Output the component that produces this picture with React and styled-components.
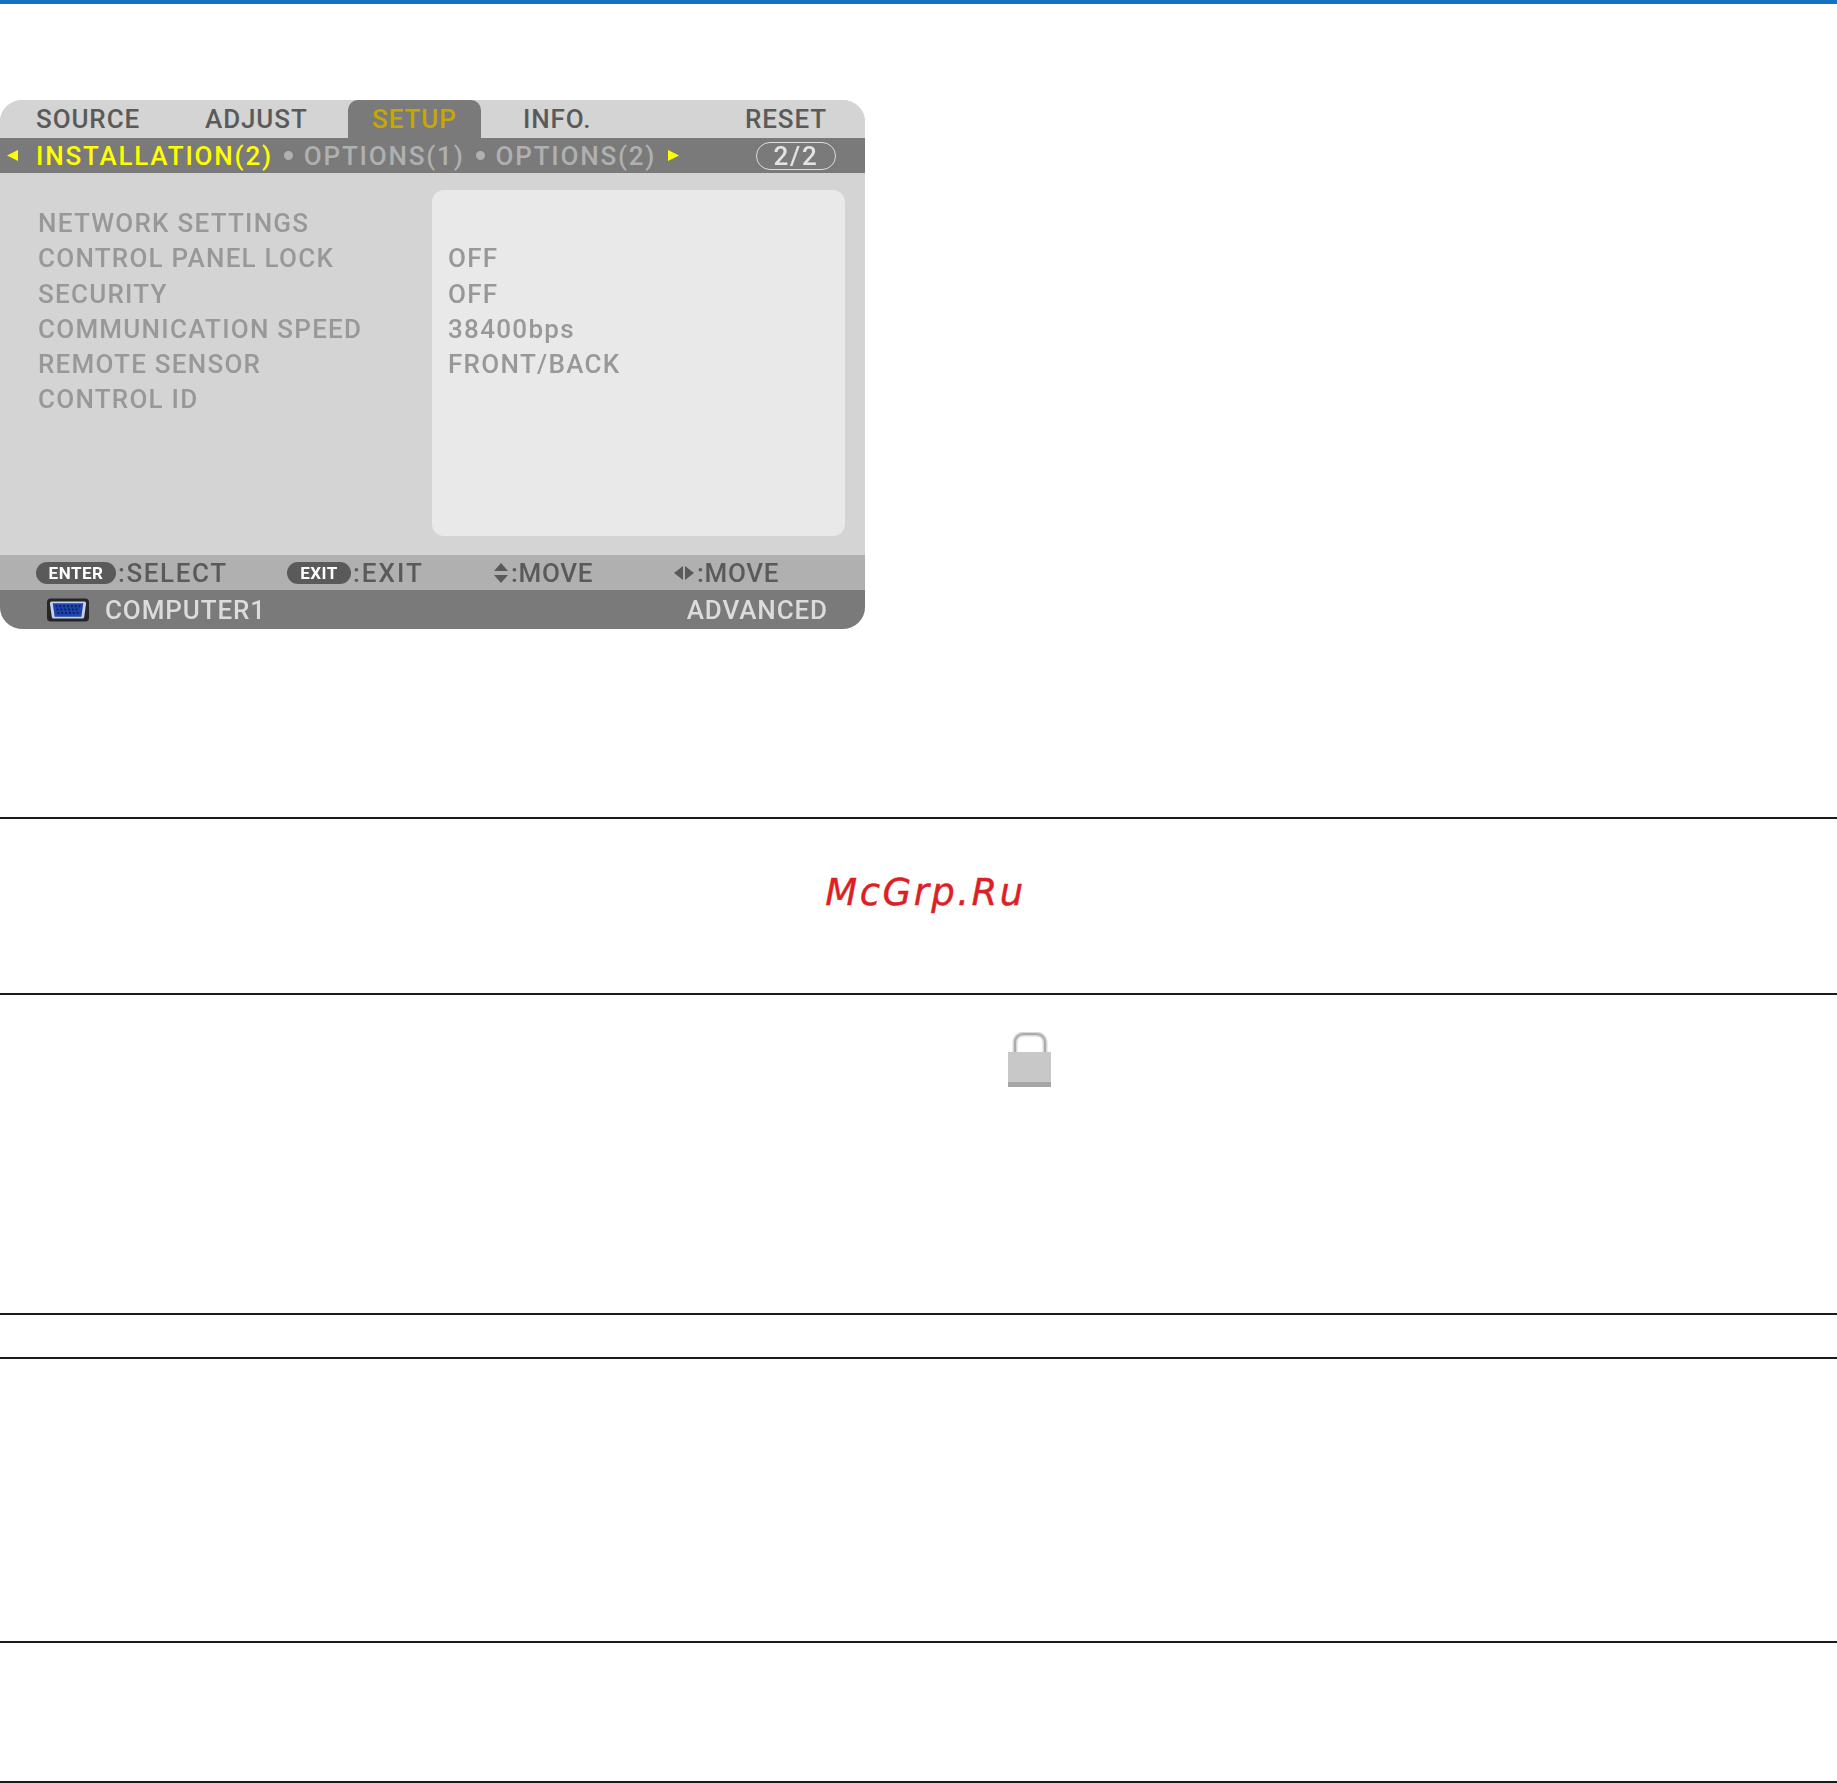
import React from "react";
import styled, { createGlobalStyle } from "styled-components";

const Global = createGlobalStyle`
  html, body { margin: 0; padding: 0; background: #fff; }
  body { font-family: Roboto, "Liberation Sans", Arial, sans-serif; }
`;
const Page = styled.div`
  width: 1837px;
  height: 1783px;
  overflow: hidden;
  display: flex;
  flex-direction: column;
`;
const TopBar = styled.div`
  height: 4px;
  background: #1470c0;
`;
const MenuSlot = styled.div`
  height: 813px;
  padding-top: 96px;
  box-sizing: border-box;
`;
const Menu = styled.div`
  width: 865px;
  height: 529px;
  border-radius: 22px;
  overflow: hidden;
  background: #d4d4d4;
  display: flex;
  flex-direction: column;
  font-size: 26px;
  font-weight: 500;
  letter-spacing: 0.9px;
  filter: blur(0.55px);
`;
const Tabs = styled.div`
  height: 38px;
  display: grid;
  grid-template-columns: 205px 143px 133px 264px 120px;
  background: #d4d4d4;
`;
const Tab = styled.div`
  display: flex;
  align-items: center;
  padding-left: ${(p) => p.$pad || 0}px;
  color: ${(p) => (p.$active ? "#c6a800" : "#5a5a5a")};
  background: ${(p) => (p.$active ? "#7a7a7a" : "transparent")};
  border-radius: ${(p) => (p.$active ? "10px 10px 0 0" : "0")};
`;
const SubBar = styled.div`
  height: 35px;
  background: #7a7a7a;
  display: flex;
  align-items: center;
  color: #b0b0b0;
  letter-spacing: 1.8px;
`;
const Arrow = styled.svg`
  display: block;
  flex: none;
  width: 11px;
  height: 11px;
  margin-left: ${(p) => p.$left || 0}px;
`;
const SubActive = styled.span`
  color: #ffff00;
  margin: 0 11px 0 ${(p) => p.$gap}px;
`;
const SubItem = styled.span`
  margin-right: ${(p) => p.$gap}px;
`;
const Dot = styled.span`
  width: 9px;
  height: 9px;
  border-radius: 50%;
  background: #b0b0b0;
  margin-right: 11px;
`;
const Pager = styled.span`
  margin-left: auto;
  margin-right: 29px;
  width: 80px;
  height: 28px;
  box-sizing: border-box;
  border: 1.5px solid #dcdcdc;
  border-radius: 14px;
  color: #e4e4e4;
  display: flex;
  align-items: center;
  justify-content: center;
`;
const Body = styled.div`
  flex: 1;
  display: flex;
  padding: 17px 20px 19px 38px;
`;
const Labels = styled.div`
  width: 394px;
  padding-top: 16px;
  color: #989898;
  letter-spacing: 1.25px;
`;
const Row = styled.div`
  height: 35.3px;
  line-height: 35.3px;
  white-space: nowrap;
`;
const Values = styled.div`
  flex: 1;
  background: #e9e9e9;
  border-radius: 12px;
  padding: 16px 0 0 16px;
  color: #989898;
  letter-spacing: 1.3px;
`;
const Hints = styled.div`
  height: 35px;
  background: #b0b0b0;
  display: grid;
  grid-template-columns: 251px 206px 180px 1fr;
  align-items: center;
  padding-left: 36px;
  color: #5a5a5a;
`;
const Hint = styled.div`
  display: flex;
  align-items: center;
  white-space: nowrap;
  letter-spacing: ${(p) => p.$spacing || 0.7}px;
`;
const Key = styled.span`
  background: #5a5a5a;
  color: #fff;
  font-weight: 700;
  font-size: 17px;
  letter-spacing: 0.5px;
  width: ${(p) => p.$w}px;
  height: 22px;
  border-radius: 11px;
  margin-right: 2px;
  display: flex;
  align-items: center;
  justify-content: center;
`;
const Glyph = styled.svg`
  display: block;
  flex: none;
  margin-right: 2px;
`;
const Status = styled.div`
  height: 39px;
  background: #7a7a7a;
  color: #dcdcdc;
  display: flex;
  align-items: center;
  padding: 0 37px 0 47px;
`;
const Source = styled.span`
  margin-left: 16px;
  flex: 1;
`;
const Sections = styled.div`
  flex: 1;
  display: flex;
  flex-direction: column;
`;
const Section = styled.div`
  height: ${(p) => p.$h}px;
  flex: none;
  box-sizing: border-box;
  border-top: 2px solid #1a1a1a;
`;
const Brand = styled.div`
  font-family: "DejaVu Sans", sans-serif;
  font-style: oblique;
  font-size: 37px;
  letter-spacing: 2.5px;
  color: #dc2024;
  -webkit-text-stroke: 0.4px #dc2024;
  text-align: center;
  padding: 52px 0 0 14px;
  line-height: 44px;
`;
const LockWrap = styled.div`
  padding: 37px 0 0 1008px;
`;
const VgaSvg = styled.svg`
  display: block;
  flex: none;
`;
const LockSvg = styled.svg`
  display: block;
`;

const VgaIcon = () => (
  <VgaSvg width="42" height="24" viewBox="0 0 44 24">
    <rect x="0" y="0" width="44" height="24" rx="4" fill="#262626" />
    <path d="M5 3h34a2 2 0 0 1 2 2l-2 14a2 2 0 0 1-2 2H7a2 2 0 0 1-2-2L3 5a2 2 0 0 1 2-2z" fill="#c8cfe8" />
    <path d="M6 5h32l-2 14H8z" fill="#1d45b0" />
    <g fill="#0c1e5c">
      {[10, 14, 18, 22, 26, 30, 34].map((x) => <rect key={x} x={x - 1} y="7" width="2" height="2" />)}
      {[11, 15, 19, 23, 27, 31].map((x) => <rect key={x} x={x - 1} y="10.5" width="2" height="2" />)}
      {[12, 16, 20, 24, 28, 32].map((x) => <rect key={x} x={x - 1} y="14" width="2" height="2" />)}
    </g>
  </VgaSvg>
);

const Lock = () => (
  <LockSvg width="44" height="56" viewBox="0 0 44 56">
    <path d="M7 21V11C7 5 11 2 16 2h12c5 0 9 3 9 9v10" fill="none" stroke="#d8d8d8" strokeWidth="5" />
    <path d="M7 21V11C7 5 11 2 16 2h12c5 0 9 3 9 9v10" fill="none" stroke="#ababab" strokeWidth="2" />
    <rect x="0" y="20" width="43" height="35" fill="#c8c8c8" />
    <rect x="0" y="50" width="43" height="5" fill="#a6a6a6" />
  </LockSvg>
);

export default function App() {
  return (
    <Page>
      <Global />
      <TopBar />
      <MenuSlot>
        <Menu>
          <Tabs>
            <Tab $pad={36}>SOURCE</Tab>
            <Tab>ADJUST</Tab>
            <Tab $active $pad={24}>SETUP</Tab>
            <Tab $pad={42}>INFO.</Tab>
            <Tab>RESET</Tab>
          </Tabs>
          <SubBar>
            <Arrow viewBox="0 0 11 11" $left={7}><path d="M11 0v11L0 5.5z" fill="#ffff00" /></Arrow>
            <SubActive $gap={18}>INSTALLATION(2)</SubActive>
            <Dot />
            <SubItem $gap={11}>OPTIONS(1)</SubItem>
            <Dot />
            <SubItem $gap={12}>OPTIONS(2)</SubItem>
            <Arrow viewBox="0 0 11 11"><path d="M0 0v11l11-5.5z" fill="#ffff00" /></Arrow>
            <Pager>2/2</Pager>
          </SubBar>
          <Body>
            <Labels>
              <Row>NETWORK SETTINGS</Row>
              <Row>CONTROL PANEL LOCK</Row>
              <Row>SECURITY</Row>
              <Row>COMMUNICATION SPEED</Row>
              <Row>REMOTE SENSOR</Row>
              <Row>CONTROL ID</Row>
            </Labels>
            <Values>
              <Row />
              <Row>OFF</Row>
              <Row>OFF</Row>
              <Row>38400bps</Row>
              <Row>FRONT/BACK</Row>
            </Values>
          </Body>
          <Hints>
            <Hint $spacing={1.6}><Key $w={80}>ENTER</Key>:SELECT</Hint>
            <Hint $spacing={2}><Key $w={64}>EXIT</Key>:EXIT</Hint>
            <Hint>
              <Glyph width="16" height="22" viewBox="0 0 16 22"><path d="M8 1l7 8H1zM1 13h14l-7 8z" fill="#5a5a5a" /></Glyph>:MOVE
            </Hint>
            <Hint>
              <Glyph width="22" height="16" viewBox="0 0 22 16"><path d="M10 1v14L1 8zM12 1l9 7-9 7z" fill="#5a5a5a" /></Glyph>:MOVE
            </Hint>
          </Hints>
          <Status>
            <VgaIcon />
            <Source>COMPUTER1</Source>
            <span>ADVANCED</span>
          </Status>
        </Menu>
      </MenuSlot>
      <Sections>
        <Section $h={176}><Brand>McGrp.Ru</Brand></Section>
        <Section $h={320}><LockWrap><Lock /></LockWrap></Section>
        <Section $h={44} />
        <Section $h={284} />
        <Section $h={140} />
        <Section $h={2} />
      </Sections>
    </Page>
  );
}
